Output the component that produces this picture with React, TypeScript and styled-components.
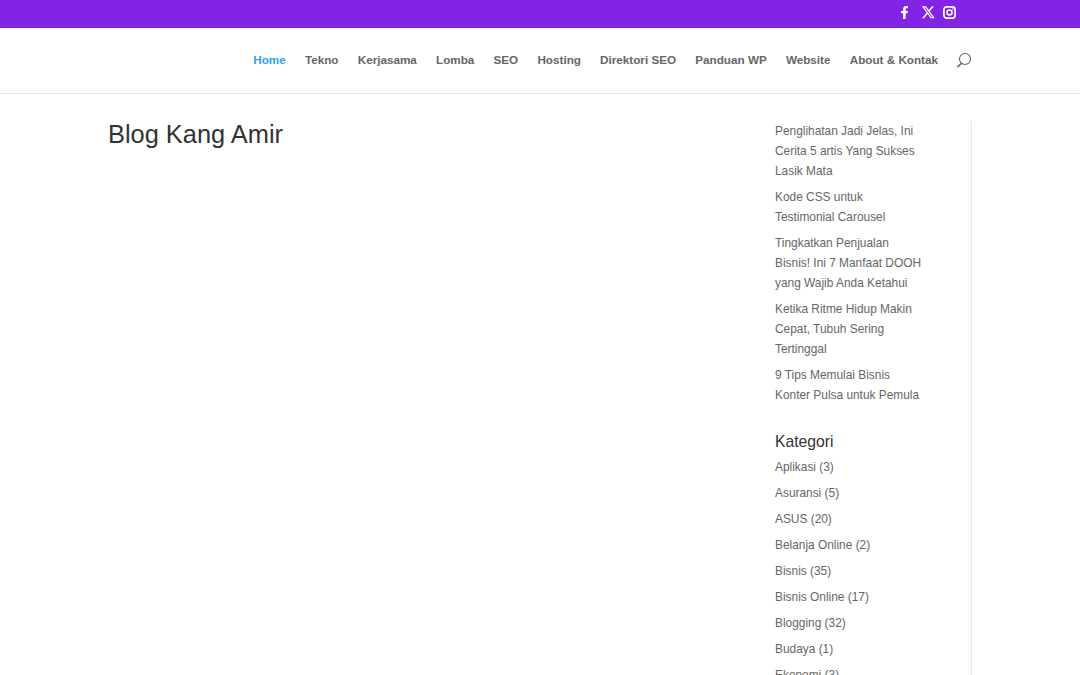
import styled, { createGlobalStyle } from "styled-components";
import { FaFacebookF } from "react-icons/fa";
import { FaXTwitter } from "react-icons/fa6";

const GlobalStyle = createGlobalStyle`
  html, body {
    margin: 0;
    height: 675px;
    overflow: hidden;
    background: #fff;
    font-family: "Liberation Sans", Arial, sans-serif;
  }
`;

const TopBar = styled.div`
  height: 25px;
  padding: 0 124px 2px 0;
  background: #8224e3;
  border-bottom: 1px solid #7a20d8;
  display: flex;
  justify-content: flex-end;
  align-items: center;
  gap: 7.3px;
  color: #fff;
`;

const FacebookIcon = styled(FaFacebookF)`
  margin-right: 2.6px;
`;

const InstagramIcon = styled.svg`
  width: 13px;
  height: 13px;
  display: block;
`;

const Header = styled.header`
  height: 63px;
  padding: 0 108px 2px 0;
  border-bottom: 1px solid #e8e8e8;
  display: flex;
  justify-content: flex-end;
  align-items: center;
`;

const Nav = styled.nav`
  display: flex;
  align-items: center;
  gap: 19.2px;
  margin-right: 18px;
`;

const NavLink = styled.a<{ $active?: boolean }>`
  font-size: 11.7px;
  font-weight: 700;
  color: ${(p) => (p.$active ? "#2ea3f2" : "#666")};
`;

const SearchIcon = styled.svg`
  width: 16px;
  height: 16px;
  display: block;
`;

const Main = styled.main`
  display: flex;
  justify-content: space-between;
  padding: 27px 108px 0;
`;

const Title = styled.h1`
  margin: 0;
  font-size: 25.4px;
  font-weight: 400;
  line-height: 26px;
  color: #333;
`;

const Sidebar = styled.aside`
  width: 197px;
  box-sizing: border-box;
  border-right: 1px solid #e8e8e8;
  font-size: 11.9px;
  color: #666;
  white-space: nowrap;
`;

const PostLink = styled.div`
  line-height: 20px;
  margin-bottom: 6px;
`;

const SectionTitle = styled.h4`
  margin: 24px 0 0;
  font-size: 15.7px;
  font-weight: 400;
  line-height: 26px;
  color: #333;
`;

const CategoryList = styled.div`
  margin-top: -1px;
`;

const CategoryRow = styled.div`
  line-height: 26px;
`;

const navItems = ["Tekno", "Kerjasama", "Lomba", "SEO", "Hosting", "Direktori SEO", "Panduan WP", "Website", "About & Kontak"];

const posts = [
  ["Penglihatan Jadi Jelas, Ini", "Cerita 5 artis Yang Sukses", "Lasik Mata"],
  ["Kode CSS untuk", "Testimonial Carousel"],
  ["Tingkatkan Penjualan", "Bisnis! Ini 7 Manfaat DOOH", "yang Wajib Anda Ketahui"],
  ["Ketika Ritme Hidup Makin", "Cepat, Tubuh Sering", "Tertinggal"],
  ["9 Tips Memulai Bisnis", "Konter Pulsa untuk Pemula"],
];

const categories = [
  "Aplikasi (3)",
  "Asuransi (5)",
  "ASUS (20)",
  "Belanja Online (2)",
  "Bisnis (35)",
  "Bisnis Online (17)",
  "Blogging (32)",
  "Budaya (1)",
  "Ekonomi (3)",
];

export default function App() {
  return (
    <>
      <GlobalStyle />
      <TopBar>
        <FacebookIcon size={13} />
        <FaXTwitter size={14.5} />
        <InstagramIcon viewBox="0 0 13 13" fill="none" stroke="#fff">
          <rect x="0.9" y="0.9" width="11.2" height="11.2" rx="2.8" strokeWidth="1.7" />
          <circle cx="6.5" cy="6.5" r="2.5" strokeWidth="1.6" />
          <circle cx="9.9" cy="3.1" r="0.8" fill="#fff" stroke="none" />
        </InstagramIcon>
      </TopBar>
      <Header>
        <Nav>
          <NavLink $active>Home</NavLink>
          {navItems.map((item) => (
            <NavLink key={item}>{item}</NavLink>
          ))}
        </Nav>
        <SearchIcon viewBox="0 0 16 16" fill="none" stroke="#666" strokeWidth="1.1">
          <circle cx="9" cy="7" r="5.5" />
          <path d="M5.6 11.1 1.4 15.1" strokeWidth="1.5" />
        </SearchIcon>
      </Header>
      <Main>
        <Title>Blog Kang Amir</Title>
        <Sidebar>
          {posts.map((lines) => (
            <PostLink key={lines[0]}>
              {lines.map((line) => (
                <div key={line}>{line}</div>
              ))}
            </PostLink>
          ))}
          <SectionTitle>Kategori</SectionTitle>
          <CategoryList>
            {categories.map((c) => (
              <CategoryRow key={c}>{c}</CategoryRow>
            ))}
          </CategoryList>
        </Sidebar>
      </Main>
    </>
  );
}
